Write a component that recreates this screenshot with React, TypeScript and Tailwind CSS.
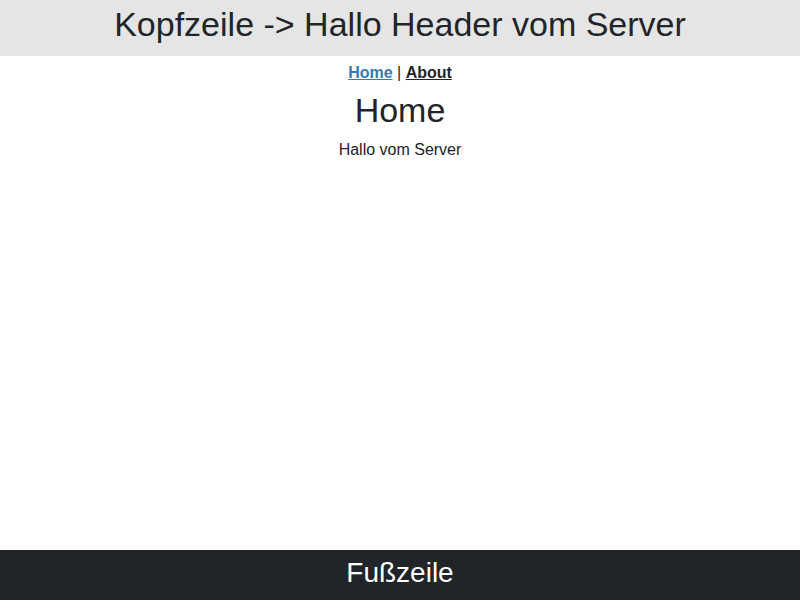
export default function App() {
  return (
    <div className="min-h-screen flex flex-col bg-white text-[#212529]" style={{ fontFamily: '"Liberation Sans", Arial, sans-serif' }}>
      <header className="h-14 pb-2 bg-[#e5e5e5] flex items-center justify-center text-[34px] leading-none">
        Kopfzeile -&gt; Hallo Header vom Server
      </header>
      <main className="flex-1 flex flex-col items-center">
        <nav className="mt-[5px] text-base leading-6">
          <a href="#" className="font-bold underline text-[#337ab7]">Home</a>
          <span> | </span>
          <a href="#" className="font-bold underline text-[#212529]">About</a>
        </nav>
        <h1 className="mt-[5px] text-[34px] leading-[40px]">Home</h1>
        <p className="mt-[8px] text-base leading-6">Hallo vom Server</p>
      </main>
      <footer className="h-[50px] pb-1 bg-[#212529] text-white flex items-center justify-center text-[28px] leading-none">
        Fußzeile
      </footer>
    </div>
  );
}
